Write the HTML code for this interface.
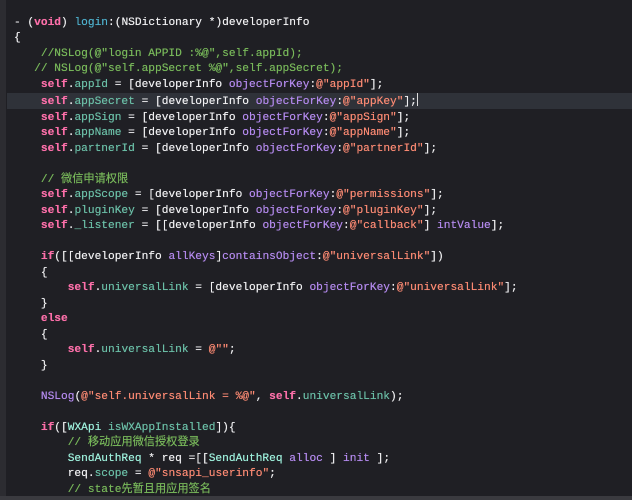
<!DOCTYPE html>
<html><head><meta charset="utf-8"><style>
html,body{margin:0;padding:0;}
body{width:632px;height:500px;overflow:hidden;background:#1f1f24;position:relative;}
.gut{position:absolute;left:0;top:0;width:6px;height:500px;background:#2c2c31;}
.hl{position:absolute;left:7px;top:93px;width:625px;height:16px;background:#2f3239;}
.bot{position:absolute;left:0;top:496px;width:632px;height:4px;background:#3a3a3f;}
pre{position:absolute;left:14px;top:15.5px;margin:0;font-family:"Liberation Mono","Noto Sans CJK SC",monospace;font-size:11.2px;line-height:15.5px;color:#f0f0f2;text-shadow:0 0 0.4px currentColor;}
.k{color:#fc6fa9;font-weight:bold}
.s{color:#fc8a73}
.c{color:#78b85a}
.p{color:#6bbfa7}
.m{color:#b48aee}
.f{color:#4eb0cc}
.t{color:#9ef1dd}
.cur{display:inline-block;width:1px;height:13px;background:#ddd;vertical-align:-2px}
</style></head><body>
<div class="gut"></div><div class="hl"></div><div class="bot"></div>
<pre>- (<span class="k">void</span>) <span class="f">login</span>:(NSDictionary *)developerInfo
{
    <span class="c">//NSLog(@"login APPID :%@",self.appId);</span>
   <span class="c">// NSLog(@"self.appSecret %@",self.appSecret);</span>
    <span class="k">self</span>.<span class="p">appId</span> = [developerInfo <span class="m">objectForKey</span>:<span class="s">@"appId"</span>];
    <span class="k">self</span>.<span class="p">appSecret</span> = [developerInfo <span class="m">objectForKey</span>:<span class="s">@"appKey"</span>];<span class="cur"></span>
    <span class="k">self</span>.<span class="p">appSign</span> = [developerInfo <span class="m">objectForKey</span>:<span class="s">@"appSign"</span>];
    <span class="k">self</span>.<span class="p">appName</span> = [developerInfo <span class="m">objectForKey</span>:<span class="s">@"appName"</span>];
    <span class="k">self</span>.<span class="p">partnerId</span> = [developerInfo <span class="m">objectForKey</span>:<span class="s">@"partnerId"</span>];

    <span class="c">// 微信申请权限</span>
    <span class="k">self</span>.<span class="p">appScope</span> = [developerInfo <span class="m">objectForKey</span>:<span class="s">@"permissions"</span>];
    <span class="k">self</span>.<span class="p">pluginKey</span> = [developerInfo <span class="m">objectForKey</span>:<span class="s">@"pluginKey"</span>];
    <span class="k">self</span>.<span class="p">_listener</span> = [[developerInfo <span class="m">objectForKey</span>:<span class="s">@"callback"</span>] <span class="m">intValue</span>];

    <span class="k">if</span>([[developerInfo <span class="m">allKeys</span>]<span class="m">containsObject</span>:<span class="s">@"universalLink"</span>])
    {
        <span class="k">self</span>.<span class="p">universalLink</span> = [developerInfo <span class="m">objectForKey</span>:<span class="s">@"universalLink"</span>];
    }
    <span class="k">else</span>
    {
        <span class="k">self</span>.<span class="p">universalLink</span> = <span class="s">@""</span>;
    }

    <span class="m">NSLog</span>(<span class="s">@"self.universalLink = %@"</span>, <span class="k">self</span>.<span class="p">universalLink</span>);

    <span class="k">if</span>([<span class="t">WXApi</span> <span class="p">isWXAppInstalled</span>]){
        <span class="c">// 移动应用微信授权登录</span>
        <span class="t">SendAuthReq</span> * req =[[<span class="t">SendAuthReq</span> <span class="m">alloc</span> ] <span class="m">init</span> ];
        req.<span class="p">scope</span> = <span class="s">@"snsapi_userinfo"</span>;
        <span class="c">// state先暂且用应用签名</span>
</pre>
</body></html>
